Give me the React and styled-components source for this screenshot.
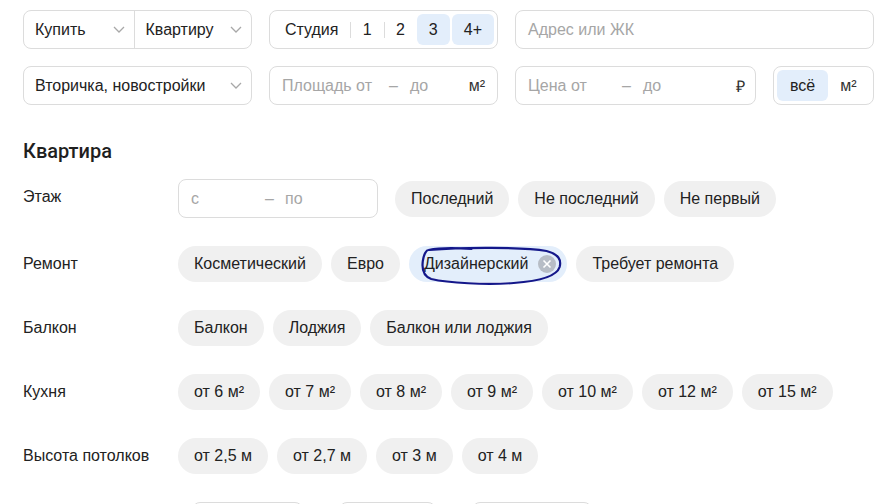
import styled, { createGlobalStyle } from "styled-components";

const Global = createGlobalStyle`
  html, body {
    margin: 0;
    padding: 0;
    background: #fff;
  }
  body {
    font-family: "Liberation Sans", Arial, sans-serif;
    color: #222;
    font-size: 16px;
    overflow: hidden;
  }
`;

const Page = styled.div`
  width: 851px;
  padding: 10px 9px 0 23px;
  position: relative;
`;

const FilterGrid = styled.div`
  display: grid;
  grid-template-columns: ${(p) => p.$cols};
  column-gap: 17px;
  margin-bottom: ${(p) => p.$mb || 0}px;
`;

const Box = styled.div`
  display: flex;
  align-items: center;
  height: 39px;
  box-sizing: border-box;
  border: 1px solid #dcdcdc;
  border-radius: 8px;
  padding: ${(p) => p.$pad || "0 12px 0 12px"};
  width: ${(p) => (p.$w ? p.$w + "px" : "auto")};
  flex-shrink: 0;
`;

const Segment = styled.div`
  display: flex;
  align-items: center;
  justify-content: space-between;
  width: ${(p) => p.$w}px;
  height: 100%;
  box-sizing: border-box;
  padding: 0 9px 0 11px;
  border-left: ${(p) => (p.$divided ? "1px solid #dcdcdc" : "none")};
`;

const Chevron = () => (
  <svg width="12" height="7" viewBox="0 0 12 7">
    <path d="M1 1l5 5 5-5" fill="none" stroke="#a8a8a8" strokeWidth="1.3" />
  </svg>
);

const Item = styled.div`
  display: flex;
  align-items: center;
  height: 31px;
  padding: 0 ${(p) => p.$px || 12}px;
  border-radius: 6px;
  background: ${(p) => (p.$active ? "#e3eefb" : "transparent")};
  margin-right: ${(p) => p.$mr || 0}px;
`;

const Sep = styled.span`
  width: 1px;
  height: 16px;
  background: #dcdcdc;
`;

const Placeholder = styled.span`
  color: #a6a6a6;
  width: ${(p) => (p.$w ? p.$w + "px" : "auto")};
  flex-shrink: 0;
`;

const Grow = styled.span`
  flex: 1;
`;

const Unit = styled.span`
  color: #333;
`;

const Title = styled.h2`
  margin: 34px 0 16px;
  font-family: Roboto, "Liberation Sans", sans-serif;
  font-size: 20px;
  line-height: 24px;
  font-weight: 500;
  color: #1f1f1f;
`;

const Rows = styled.div`
  display: flex;
  flex-direction: column;
  gap: 28px;
`;

const Row = styled.div`
  display: flex;
  align-items: flex-start;
`;

const Label = styled.div`
  width: 155px;
  flex-shrink: 0;
  padding-top: 8px;
  line-height: 20px;
`;

const Controls = styled.div`
  display: flex;
  align-items: center;
  gap: ${(p) => p.$gap || 9}px;
  padding-left: ${(p) => p.$pl || 0}px;
`;

const Chip = styled.div`
  position: relative;
  display: flex;
  align-items: center;
  gap: 9px;
  height: 36px;
  padding: ${(p) => (p.$active ? "0 10px 0 15px" : "0 16px")};
  border-radius: 18px;
  background: ${(p) => (p.$active ? "#e3eefb" : "#f0f0f0")};
  margin-left: ${(p) => p.$ml || 0}px;
  white-space: nowrap;
`;

const Clear = () => (
  <svg width="20" height="20" viewBox="0 0 20 20">
    <circle cx="10" cy="10" r="9" fill="#b7bdc6" />
    <path d="M6.5 6.5l7 7M13.5 6.5l-7 7" stroke="#fff" strokeWidth="1.6" />
  </svg>
);

const Scribble = styled.svg`
  position: absolute;
  left: 11px;
  top: 0;
  width: calc(100% - 16px);
  height: 40px;
  overflow: visible;
  pointer-events: none;
`;

const Ink = () => (
  <Scribble viewBox="0 0 152 40" preserveAspectRatio="none">
    <path
      d="M10 4 C45 1 110 1 135 5 C148 8 151 14 149 21 C146 30 130 35 100 37 C70 39 30 37 12 33 C3 30 2 22 3 15 C4 8 7 4 9 4 C20 2 40 2 55 3"
      fill="none"
      stroke="#14178a"
      strokeWidth="2.2"
      strokeLinecap="round"
      vectorEffect="non-scaling-stroke"
    />
  </Scribble>
);

const chipRows = [
  {
    label: "Ремонт",
    chips: ["Косметический", "Евро", "Дизайнерский", "Требует ремонта"],
    active: "Дизайнерский",
  },
  { label: "Балкон", chips: ["Балкон", "Лоджия", "Балкон или лоджия"] },
  {
    label: "Кухня",
    chips: ["от 6 м²", "от 7 м²", "от 8 м²", "от 9 м²", "от 10 м²", "от 12 м²", "от 15 м²"],
  },
  { label: "Высота потолков", chips: ["от 2,5 м", "от 2,7 м", "от 3 м", "от 4 м"] },
];

export default function App() {
  return (
    <>
      <Global />
      <Page>
        <FilterGrid $cols="229px 229px 1fr" $mb={17}>
          <Box $pad="0">
            <Segment $w={110}>
              Купить <Chevron />
            </Segment>
            <Segment $w={118} $divided>
              Квартиру <Chevron />
            </Segment>
          </Box>
          <Box $pad="0 3px">
            <Item>Студия</Item>
            <Sep />
            <Item>1</Item>
            <Sep />
            <Item>2</Item>
            <Item $active $mr={2}>
              3
            </Item>
            <Item $active>4+</Item>
          </Box>
          <Box>
            <Placeholder>Адрес или ЖК</Placeholder>
          </Box>
        </FilterGrid>

        <FilterGrid $cols="229px 229px 241px 101px">
          <Box $pad="0 9px 0 11px">
            Вторичка, новостройки
            <Grow />
            <Chevron />
          </Box>
          <Box>
            <Placeholder $w={107}>Площадь от</Placeholder>
            <Placeholder $w={21}>–</Placeholder>
            <Placeholder>до</Placeholder>
            <Grow />
            <Unit>м²</Unit>
          </Box>
          <Box $pad="0 10px 0 12px">
            <Placeholder $w={94}>Цена от</Placeholder>
            <Placeholder $w={21}>–</Placeholder>
            <Placeholder>до</Placeholder>
            <Grow />
            <Unit>₽</Unit>
          </Box>
          <Box $pad="0 3px">
            <Item $px={13} $active $mr={12}>
              всё
            </Item>
            <Unit>м²</Unit>
          </Box>
        </FilterGrid>

        <Title>Квартира</Title>

        <Rows>
          <Row>
            <Label>Этаж</Label>
            <Controls>
              <Box $w={200}>
                <Placeholder $w={74}>с</Placeholder>
                <Placeholder $w={20}>–</Placeholder>
                <Placeholder>по</Placeholder>
              </Box>
              <Chip $ml={8}>Последний</Chip>
              <Chip>Не последний</Chip>
              <Chip>Не первый</Chip>
            </Controls>
          </Row>

          {chipRows.map((row) => (
            <Row key={row.label}>
              <Label>{row.label}</Label>
              <Controls>
                {row.chips.map((c) =>
                  c === row.active ? (
                    <Chip key={c} $active>
                      {c}
                      <Clear />
                      <Ink />
                    </Chip>
                  ) : (
                    <Chip key={c}>{c}</Chip>
                  )
                )}
              </Controls>
            </Row>
          ))}

          <Row>
            <Label />
            <Controls $pl={14} $gap={36}>
              <Box $w={111} />
              <Box $w={97} />
              <Box $w={120} />
            </Controls>
          </Row>
        </Rows>
      </Page>
    </>
  );
}
